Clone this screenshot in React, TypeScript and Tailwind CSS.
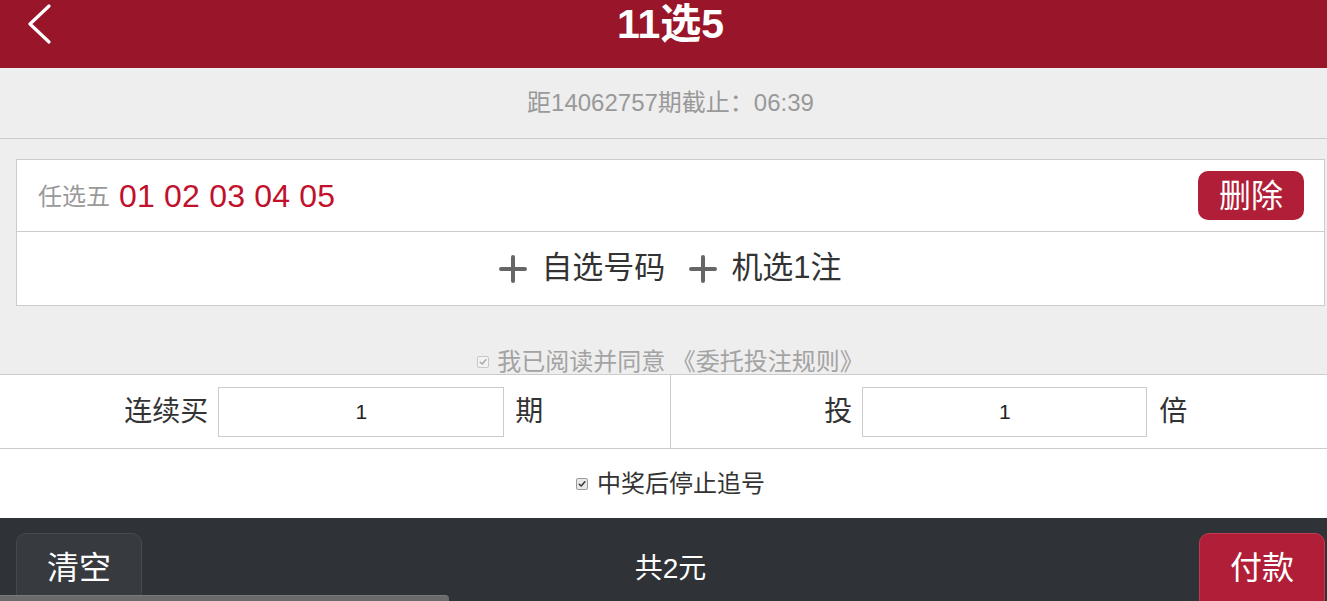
import React from 'react';

const FONT = '"Liberation Sans", "Noto Sans CJK SC", Arial, sans-serif';

function Check({ faded = false }: { faded?: boolean }) {
  return (
    <span
      className={
        'inline-flex items-center justify-center w-[12px] h-[12px] rounded-[2px] border ' +
        (faded ? 'border-[#c8c8c8] bg-[#f2f2f2]' : 'border-[#9a9a9a] bg-[#e9e9e9]')
      }
    >
      <svg viewBox="0 0 10 10" className="w-[8px] h-[8px]">
        <path
          d="M1.5 5.2 L4 7.6 L8.6 2.2"
          fill="none"
          stroke={faded ? '#a8a8a8' : '#333'}
          strokeWidth="1.8"
          strokeLinecap="round"
          strokeLinejoin="round"
        />
      </svg>
    </span>
  );
}

function Plus() {
  return (
    <svg viewBox="0 0 28 28" className="w-[28px] h-[28px]">
      <path d="M14 2 V26 M2 14 H26" stroke="#666" strokeWidth="4" strokeLinecap="round" fill="none" />
    </svg>
  );
}

export default function App() {
  return (
    <div className="relative w-full h-[601px] overflow-hidden bg-[#eeeeee]" style={{ fontFamily: FONT }}>
      <div className="w-[1341px]">
        {/* header */}
        <div className="grid grid-cols-[1fr_auto_1fr] h-[68px] bg-[#991529] text-white">
          <div className="pl-[27px] pt-[4px]">
            <svg viewBox="0 0 26 42" className="w-[26px] h-[42px]">
              <path d="M22 2 L3 20 L22 38" fill="none" stroke="#fff" strokeWidth="3.2" strokeLinecap="round" strokeLinejoin="round" />
            </svg>
          </div>
          <h1 className="text-[41px] font-bold leading-[46px] pt-[1px]">11选5</h1>
          <div />
        </div>

        {/* countdown */}
        <div className="h-[71px] flex items-center justify-center border-b border-[#cccccc] text-[#999] text-[24px]">
          距14062757期截止：06:39
        </div>

        {/* selections */}
        <div className="pt-[20px] px-[16px]">
          <div className="bg-white border border-[#cccccc]">
            <div className="h-[72px] flex items-center justify-between pl-[21px] pr-[20px] border-b border-[#cccccc]">
              <div className="flex items-center gap-[9px]">
                <span className="text-[24px] text-[#999] pt-[2px]">任选五</span>
                <span className="text-[32px] text-[#c1112c] tracking-[0.2px]">01 02 03 04 05</span>
              </div>
              <button className="w-[106px] h-[49px] rounded-[10px] bg-[#b11e37] text-white text-[32px] leading-none">
                删除
              </button>
            </div>
            <div className="h-[73px] flex items-center justify-center text-[31px] text-[#333]">
              <span className="flex items-center gap-[14px]">
                <Plus />
                自选号码
              </span>
              <span className="flex items-center gap-[14px] ml-[24px]">
                <Plus />
                机选1注
              </span>
            </div>
          </div>
        </div>

        {/* agreement */}
        <div className="mt-[44px] h-[24px] flex items-center justify-center gap-[8px] text-[24px] leading-[24px] text-[#a3a3a3]">
          <Check faded />
          <span>我已阅读并同意 《委托投注规则》</span>
        </div>

        {/* period / multiple */}
        <div className="bg-white">
          <div className="h-[75px] grid grid-cols-2 border-y border-[#cccccc] text-[28px] text-[#333]">
            <div className="flex items-center justify-center pr-[2px] border-r border-[#cccccc]">
              <span>连续买</span>
              <input
                readOnly
                defaultValue="1"
                className="ml-[10px] w-[286px] h-[50px] border border-[#cccccc] text-center text-[21px] text-[#222] outline-none"
              />
              <span className="ml-[11px]">期</span>
            </div>
            <div className="flex items-center justify-center">
              <span>投</span>
              <input
                readOnly
                defaultValue="1"
                className="ml-[10px] w-[285px] h-[50px] border border-[#cccccc] text-center text-[21px] text-[#222] outline-none"
              />
              <span className="ml-[12px]">倍</span>
            </div>
          </div>
          <div className="h-[69px] flex items-center justify-center gap-[9px] text-[24px] text-[#333]">
            <Check />
            <span>中奖后停止追号</span>
          </div>
        </div>

        {/* footer */}
        <div className="h-[84px] bg-[#2f3236] flex items-start justify-between pt-[15px] px-[16px] text-white">
          <button className="w-[126px] h-[76px] pb-[6px] rounded-[10px] bg-[#373a3e] border border-[#46494d] text-[32px]">
            清空
          </button>
          <div className="text-[28px] pt-[15px]">共2元</div>
          <button className="w-[126px] h-[76px] pb-[6px] rounded-[10px] bg-[#b11e37] border border-[#c23a50] text-[32px]">
            付款
          </button>
        </div>
      </div>

      {/* scrollbar overlay */}
      <div className="absolute left-0 bottom-0 w-[449px] h-[6px] bg-[#6b6b6b] rounded-tr-[4px] border-t border-[#7a7a7a]" />
    </div>
  );
}
